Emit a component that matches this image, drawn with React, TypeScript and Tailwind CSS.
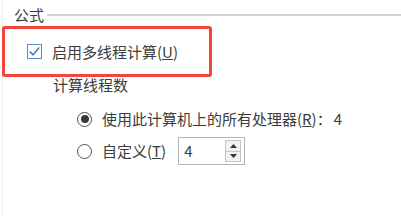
import React from "react";

export default function App() {
  const font = { fontFamily: '"Noto Sans CJK SC", "Noto Sans", sans-serif' };
  return (
    <div
      className="w-[401px] h-[216px] bg-white overflow-hidden pl-[2px] text-[15px] text-[#3c3c3c]"
      style={font}
    >
      <div className="h-full border-l border-[#ececec] flex flex-col">
        {/* header */}
        <div className="h-[26px] pt-[4px] flex items-center">
          <span className="ml-[11px] leading-[16px]">公式</span>
          <div className="flex-1 h-[2px] bg-[#d2d2d2] ml-[3px]" />
        </div>

        {/* highlighted checkbox row */}
        <div className="-ml-px w-[210px] h-[51px] border-[3px] border-[#f2453d] rounded-[3px] flex items-center pl-[22px]">
          <div className="w-[15px] h-[15px] border border-[#5e8cc8] bg-white flex items-center justify-center">
            <svg width="13" height="13" viewBox="0 0 13 13">
              <path d="M1.8 6.6 L5 9.8 L11.2 2.6" fill="none" stroke="#3f7cc7" strokeWidth="1.5" />
            </svg>
          </div>
          <span className="ml-[10px] leading-[18px]">
            启用多线程计算(<u>U</u>)
          </span>
        </div>

        {/* label */}
        <div className="h-[16px] flex items-center pl-[50px]">
          <span className="leading-[16px]">计算线程数</span>
        </div>

        {/* radio 1 */}
        <div className="mt-[17px] h-[18px] flex items-center pl-[74px]">
          <div className="w-[15px] h-[15px] rounded-full border border-[#505050] flex items-center justify-center">
            <div className="w-[8px] h-[8px] rounded-full bg-[#3a3a3a]" />
          </div>
          <span className="ml-[10px] leading-[18px]">
            使用此计算机上的所有处理器(<u>R</u>)：
          </span>
          <span className="ml-[2px] leading-[18px]">4</span>
        </div>

        {/* radio 2 */}
        <div className="mt-[9px] h-[28px] flex items-center pl-[74px]">
          <div className="w-[15px] h-[15px] rounded-full border border-[#505050]" />
          <span className="ml-[10px] leading-[18px]">
            自定义(<u>T</u>)
          </span>
          <div className="ml-[12px] w-[67px] h-[28px] border border-[#b4b4b4] flex items-center bg-white">
            <span className="ml-[5px] flex-1 leading-[18px]">4</span>
            <div className="mr-[3px] w-[16px] h-[22px] border border-[#c4c4c4] flex flex-col">
              <div className="flex-1 bg-[#f2f2f2] border-b border-[#c4c4c4] flex items-center justify-center">
                <svg width="7" height="4" viewBox="0 0 7 4">
                  <path d="M0 4 L3.5 0 L7 4 Z" fill="#333" />
                </svg>
              </div>
              <div className="flex-1 bg-[#f2f2f2] flex items-center justify-center">
                <svg width="7" height="4" viewBox="0 0 7 4">
                  <path d="M0 0 L7 0 L3.5 4 Z" fill="#333" />
                </svg>
              </div>
            </div>
          </div>
        </div>
      </div>
    </div>
  );
}
